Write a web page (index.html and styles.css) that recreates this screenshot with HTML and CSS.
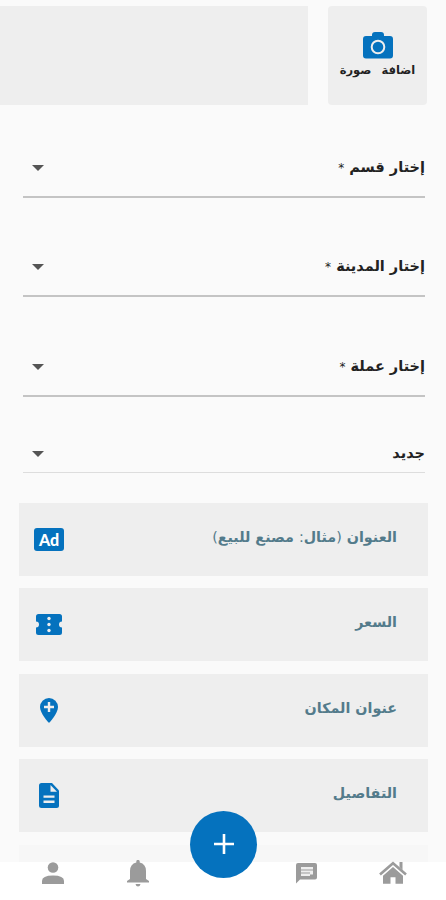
FILE: index.html
```html
<!DOCTYPE html>
<html lang="ar" dir="rtl">

<head>
  <meta charset="UTF-8" />
  <meta name="viewport" content="width=device-width, initial-scale=1.0">
  <title>اضافة اعلان</title>
  <link rel="stylesheet" href="styles.css">
</head>

<body>
  <main class="page">
    <div class="photos">
      <button class="add-photo">
        <svg width="30" height="27" viewBox="0 0 30 27">
          <path fill="#0572be" d="M3 4h6V3q0-3 3-3h6q3 0 3 3v1h6q3 0 3 3v16.500q0 3-3 3H3q-3 0-3-3V7q0-3 3-3z" />
          <circle cx="15" cy="15" r="6.300" fill="none" stroke="#eee" stroke-width="2" />
        </svg>
        <span class="photo-label">اضافة صورة</span>
      </button>
      <div class="photo-list"></div>
    </div>

    <div class="selects">
      <div class="select"><span class="select-text">إختار قسم <span class="star">*</span></span><i class="arrow"></i></div>
      <div class="select"><span class="select-text">إختار المدينة <span class="star">*</span></span><i class="arrow"></i></div>
      <div class="select"><span class="select-text">إختار عملة <span class="star">*</span></span><i class="arrow"></i></div>
      <div class="select select-last"><span class="select-text">جديد</span><i class="arrow"></i></div>
    </div>

    <div class="fields">
      <div class="field">
        <span class="field-text">العنوان <span class="thin">(</span>مثال<span class="thin">:</span> مصنع للبيع<span class="thin">)</span></span>
        <span class="field-icon"><b class="ad-badge">Ad</b></span>
      </div>
      <div class="field">
        <span class="field-text">السعر</span>
        <span class="field-icon">
          <svg width="26" height="21" viewBox="0 0 26 21">
            <path fill="#0572be" d="M2.500 0h21Q26 0 26 2.500V7.500a3 3 0 0 0 0 6v5q0 2.500-2.500 2.500h-21Q0 21 0 18.500v-5a3 3 0 0 0 0-6V2.500Q0 0 2.500 0z" />
            <g fill="#eee">
              <circle cx="13" cy="4.500" r="1.700" />
              <circle cx="13" cy="10.500" r="1.700" />
              <circle cx="13" cy="16.500" r="1.700" />
            </g>
          </svg>
        </span>
      </div>
      <div class="field">
        <span class="field-text">عنوان المكان</span>
        <span class="field-icon">
          <svg width="18" height="25" viewBox="0 0 18 25">
            <path fill="#0572be" d="M9 0a9 9 0 0 1 9 9c0 6.500-9 16-9 16S0 15.500 0 9a9 9 0 0 1 9-9z" />
            <path stroke="#eee" stroke-width="2.400" d="M9 4v10M4 9h10" />
          </svg>
        </span>
      </div>
      <div class="field">
        <span class="field-text">التفاصيل</span>
        <span class="field-icon">
          <svg width="20" height="25" viewBox="0 0 20 25">
            <path fill="#0572be" d="M2.500 0H13l7 7.500v15q0 2.500-2.500 2.500h-15Q0 25 0 22.500v-20Q0 0 2.500 0z" />
            <path fill="#eee" d="M11.500 2v6.800H18z" />
            <path stroke="#eee" stroke-width="2.400" d="M4.500 13.600h11M4.500 18.800h11" />
          </svg>
        </span>
      </div>
      <div class="field field-faded"></div>
    </div>
  </main>

  <nav class="bottom-bar">
    <a class="tab">
      <svg width="28" height="24" viewBox="0 0 28 24">
        <path fill="none" stroke="#9b9b9b" stroke-width="2.600" d="M1 13.500 14 2.200l13 11.300" />
        <path fill="#9b9b9b" d="M20.500 1h3v8l-3-3zM14 6l10 8.700v8h-7.500v-6.500h-5v6.500H4v-8z" />
      </svg>
    </a>
    <a class="tab tab-chat">
      <svg width="21" height="21" viewBox="0 0 21 21">
        <path fill="#9b9b9b" d="M2 0h17q2 0 2 2v12.500q0 2-2 2H4L0 20.500V2q0-2 2-2z" />
        <path fill="#eee" d="M5 4h12v7.500h-3V13H5z" />
        <path stroke="#9b9b9b" stroke-width="1" d="M5 7h12M5 10h9" />
      </svg>
    </a>
    <a class="tab tab-gap"></a>
    <a class="tab">
      <svg width="22" height="27" viewBox="0 0 22 27">
        <path fill="#9b9b9b" d="M9.300 2.500V1.600a1.700 1.700 0 0 1 3.400 0v.9Q19 4 19 11v8l3 2v1.500H0V21l3-2v-8q0-7 6.300-8.500zM8.500 24h5q-.5 2.500-2.500 2.500T8.500 24z" />
      </svg>
    </a>
    <a class="tab">
      <svg width="22" height="22" viewBox="0 0 22 22">
        <circle cx="11" cy="5.500" r="5.300" fill="#9b9b9b" />
        <path fill="#9b9b9b" d="M0 22v-3q0-5.500 11-5.500T22 19v3z" />
      </svg>
    </a>
    <button class="add-button">
      <svg width="20" height="20" viewBox="0 0 20 20">
        <path stroke="#fff" stroke-width="2.600" d="M10 0v20M0 10h20" />
      </svg>
    </button>
  </nav>
</body>

</html>
```

FILE: styles.css
```css
* {
  box-sizing: border-box;
}

body {
  margin: 0;
  height: 900px;
  display: flex;
  flex-direction: column;
  overflow: hidden;
  background: #fafafa;
  font-family: "DejaVu Sans", sans-serif;
}

button {
  border: 0;
  padding: 0;
  font-family: inherit;
}

svg {
  display: block;
}

.page {
  height: 862px;
  overflow: hidden;
}

.photos {
  display: flex;
  gap: 20px;
  padding: 6px 19px 0 0;
}

.add-photo {
  width: 99px;
  height: 99px;
  display: flex;
  flex-direction: column;
  align-items: center;
  padding-top: 26px;
  background: #eee;
  border-radius: 4px;
}

.photo-label {
  margin-top: 2px;
  font-size: 11.500px;
  font-weight: bold;
  line-height: 18px;
  white-space: nowrap;
  word-spacing: 6px;
  color: #222;
}

.photo-list {
  flex: 1;
  background: #eee;
}

.selects {
  padding: 33px 21px 0 23px;
}

.select {
  height: 60px;
  display: flex;
  justify-content: space-between;
  align-items: flex-start;
  padding: 16px 0 0 15px;
  margin-bottom: 39.300px;
  border-bottom: 2px solid #c4c4c4;
}

.select-text {
  font-size: 14.500px;
  font-weight: bold;
  line-height: 26px;
  color: #222;
}

.star {
  font-size: 12px;
  font-weight: normal;
}

.arrow {
  margin: 11px 0 0 -6px;
  border: 6px solid transparent;
  border-top-color: #555;
  border-bottom: 0;
}

.select-last {
  height: 49px;
  margin: -12px 0 0;
  border-bottom: 1px solid #ddd;
}

.fields {
  display: flex;
  flex-direction: column;
  gap: 12.500px;
  padding: 30px 18px 0 19px;
}

.field {
  height: 73px;
  flex: none;
  display: flex;
  justify-content: space-between;
  align-items: center;
  padding: 0 31px 0 14px;
  background: #eee;
}

.field-text {
  padding-bottom: 5px;
  font-size: 14.300px;
  font-weight: bold;
  color: #537b8b;
}

.thin {
  font-weight: normal;
}

.field-icon {
  width: 32px;
  display: flex;
  justify-content: center;
}

.ad-badge {
  width: 30px;
  height: 23px;
  background: #0572be;
  border-radius: 3px;
  color: #fff;
  font: 900 16px/23px Lato, sans-serif;
  text-align: center;
}

.field-faded {
  background: #f7f7f7;
}

.bottom-bar {
  position: relative;
  height: 38px;
  display: flex;
  align-items: center;
  padding: 0 11px 16px;
  background: #fff;
}

.tab {
  flex: 1;
  display: flex;
  justify-content: center;
}

.tab-chat {
  padding-right: 2px;
}

/* floats over the middle of the bar */
.add-button {
  position: absolute;
  left: 190px;
  bottom: 22.500px;
  width: 67px;
  height: 67px;
  display: flex;
  align-items: center;
  justify-content: center;
  border-radius: 50%;
  background: #0572be;
}
```
